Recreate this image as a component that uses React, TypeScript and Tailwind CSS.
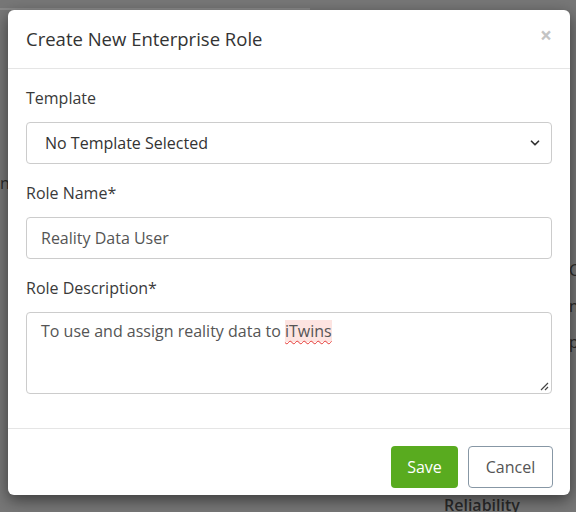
import { ChevronDown } from 'lucide-react';

export default function App() {
  return (
    <div className="relative w-[576px] h-[512px] overflow-hidden bg-[#777777] font-['Open_Sans',sans-serif]">
      {/* page behind the backdrop */}
      <div className="absolute left-0 top-[8px] w-[310px] h-[2px] bg-[#8a8a8a]" />
      <div className="absolute left-0 top-[175px] text-[16px] text-[#2a2a2a] leading-none">ns</div>
      <div className="absolute left-[569px] top-[262px] flex flex-col gap-[20px] text-[16px] text-[#2a2a2a] leading-none">
        <span>C</span>
        <span>n</span>
        <span>p</span>
      </div>
      <div className="absolute left-[444px] top-[497px] text-[16px] font-semibold text-[#2a2a2a] leading-none">Reliability</div>

      {/* modal */}
      <div className="absolute left-[8px] top-[10px] w-[562px] h-[485px] bg-white rounded-[6px] shadow-[0_5px_15px_rgba(0,0,0,0.5)] flex flex-col">
        <div className="h-[59px] flex items-center justify-between px-[18px] border-b border-[#e5e5e5]">
          <h4 className="text-[18.5px] text-[#333]">Create New Enterprise Role</h4>
          <span className="text-[21px] leading-none text-[#c4c4c4] font-bold -mt-[8px]">×</span>
        </div>

        <div className="flex flex-col px-[18px] pt-[18px] text-[16px] text-[#3a3a3a]">
          <label className="leading-[22px]">Template</label>
          <div className="mt-[13px] h-[42px] border border-[#ccc] rounded-[4px] flex items-center justify-between pl-[18px] pr-[9px] text-[#333]">
            <span>No Template Selected</span>
            <ChevronDown size={14} strokeWidth={3} className="text-[#333]" />
          </div>

          <label className="mt-[18px] leading-[22px]">Role Name*</label>
          <div className="mt-[13px] h-[42px] border border-[#ccc] rounded-[4px] flex items-center pl-[14px] text-[#555]">
            Reality Data User
          </div>

          <label className="mt-[18px] leading-[22px]">Role Description*</label>
          <div className="relative mt-[13px] h-[82px] border border-[#ccc] rounded-[4px] pl-[14px] pt-[6px] text-[#555]">
            To use and assign reality data to{' '}
            <span className="bg-[#fde4e1] underline decoration-wavy decoration-[#e53935] decoration-1 underline-offset-[3px]">iTwins</span>
            <svg className="absolute right-[2px] bottom-[2px]" width="9" height="9" viewBox="0 0 9 9">
              <path d="M8 1 L1 8 M8 5 L5 8" stroke="#444" strokeWidth="1.2" />
            </svg>
          </div>
        </div>

        <div className="mt-[34px] border-t border-[#e5e5e5] flex justify-end gap-[10px] px-[17px] pt-[17px]">
          <button className="h-[42px] w-[67px] rounded-[4px] bg-[#59ab1f] text-white text-[16px]">Save</button>
          <button className="h-[42px] w-[85px] rounded-[4px] border border-[#8797a5] bg-white text-[#555] text-[16px]">Cancel</button>
        </div>
      </div>
    </div>
  );
}
